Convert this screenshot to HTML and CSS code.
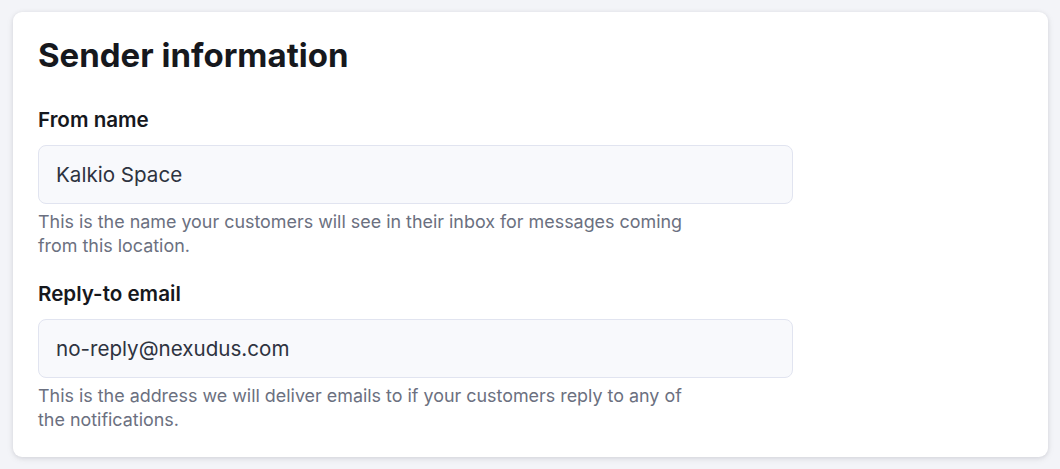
FILE: index.html
```html
<!DOCTYPE html>
<html lang="en">
<head>
<meta charset="utf-8">
<title>Sender information</title>
<link rel="stylesheet" href="styles.css">
</head>
<body>
<main class="page">
  <section class="card">
    <h1 class="card-title">Sender information</h1>
    <div class="fields">
      <div class="field">
        <label class="field-label" for="from-name">From name</label>
        <input class="field-input" id="from-name" type="text" value="Kalkio Space">
        <p class="field-help">This is the name your customers will see in their inbox for messages coming from this location.</p>
      </div>
      <div class="field">
        <label class="field-label" for="reply-to">Reply-to email</label>
        <input class="field-input" id="reply-to" type="text" value="no-reply@nexudus.com">
        <p class="field-help">This is the address we will deliver emails to if your customers reply to any of the notifications.</p>
      </div>
    </div>
  </section>
</main>
</body>
</html>
```

FILE: styles.css
```css
* { box-sizing: border-box; }
html, body { margin: 0; padding: 0; }
body {
  background: #f3f4f8;
  font-family: Inter, "Noto Sans", "Liberation Sans", sans-serif;
  color: #16181d;
}
.page {
  padding: 12px 12px 13px 13px;
}
.card {
  background: #ffffff;
  border-radius: 9px;
  box-shadow: 0 1px 4px rgba(20, 24, 40, 0.10), 0 2px 8px rgba(20, 24, 40, 0.06);
  padding: 28px 25px 25px;
  display: flex;
  flex-direction: column;
  gap: 38px;
}
.card-title {
  margin: 0;
  font-size: 33px;
  line-height: 30px;
  font-weight: 700;
  color: #16181d;
}
.fields {
  display: flex;
  flex-direction: column;
  gap: 24px;
}
.field {
  display: flex;
  flex-direction: column;
}
.field-label {
  font-size: 20.6px;
  line-height: 24px;
  font-weight: 600;
  color: #16181d;
  margin-bottom: 13px;
}
.field-input {
  width: 755px;
  height: 59px;
  border: 1px solid #e1e4f0;
  border-radius: 8px;
  background: #f8f9fc;
  padding: 0 17px;
  font-family: inherit;
  font-size: 20.6px;
  color: #2e3340;
  outline: none;
}
.field-help {
  margin: 6px 0 0;
  max-width: 672px;
  font-size: 17.9px;
  line-height: 24px;
  color: #6b7080;
}
```
